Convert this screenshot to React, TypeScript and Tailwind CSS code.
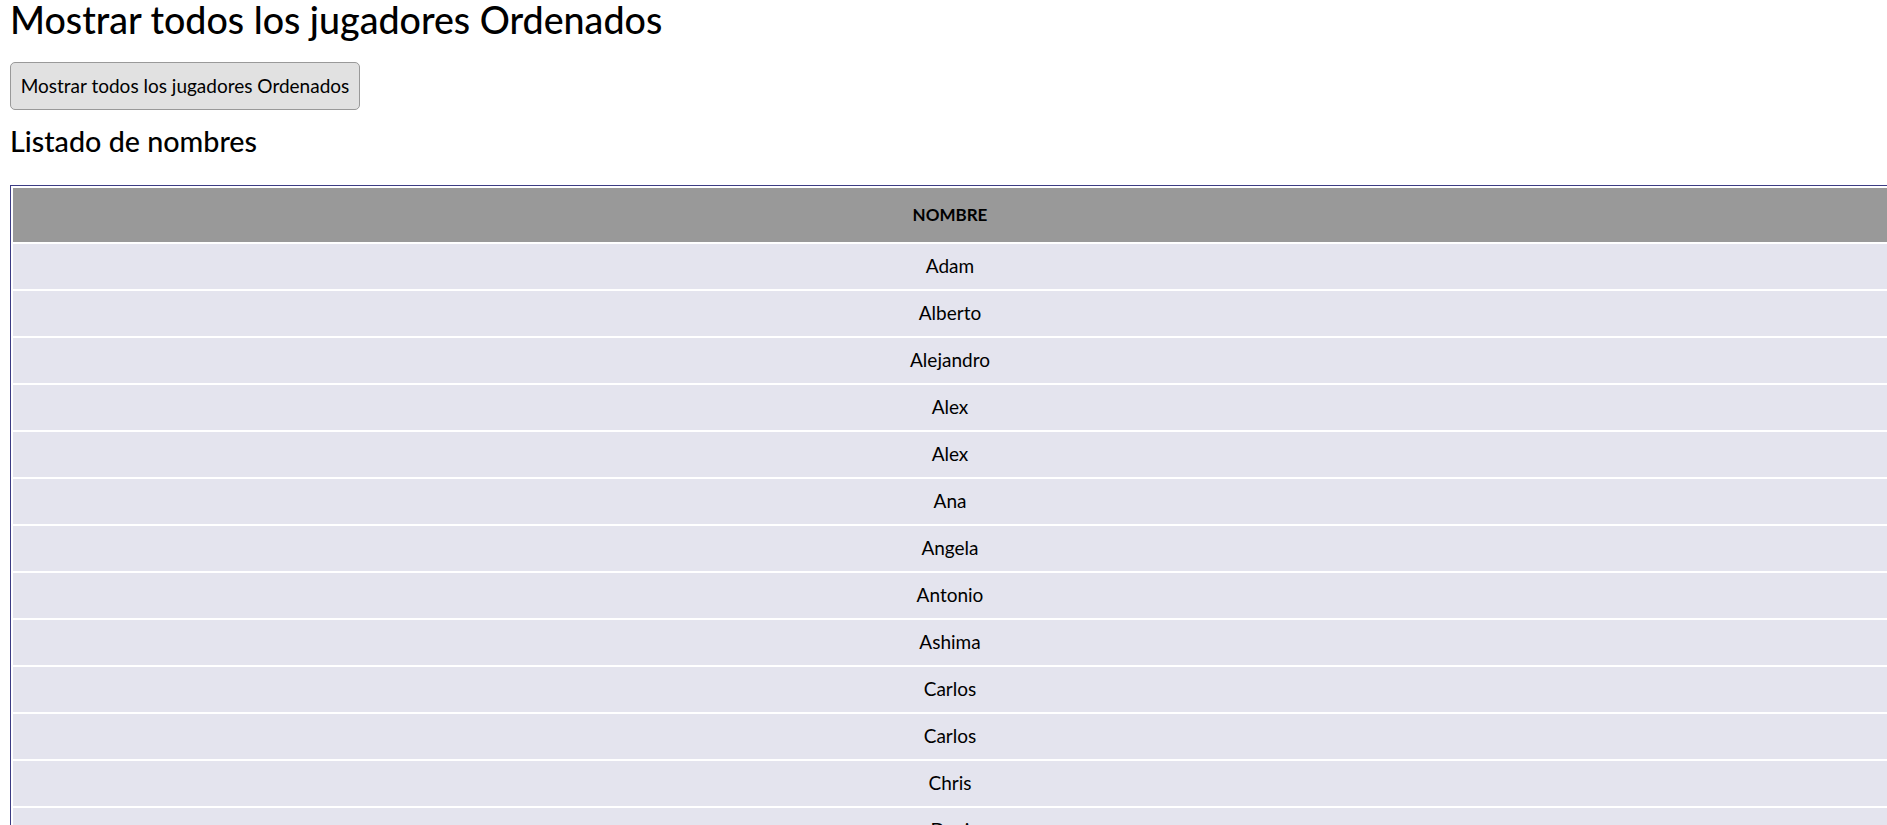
const jugadores = [
  "Adam",
  "Alberto",
  "Alejandro",
  "Alex",
  "Alex",
  "Ana",
  "Angela",
  "Antonio",
  "Ashima",
  "Carlos",
  "Carlos",
  "Chris",
  "Dani",
  "Daniel",
  "David",
  "Elena",
  "Fernando",
];

const App = () => {
  return (
    <div className="min-h-screen bg-white px-[10px] font-['Lato',sans-serif] text-black overflow-x-hidden">
      <h1 className="text-[37.6px] leading-[40px] font-medium">
        Mostrar todos los jugadores Ordenados
      </h1>
      <button className="mt-[22px] h-[48px] w-[350px] rounded-[5px] border border-[#999999] bg-[#e1e1e1] pb-[2px] text-[19px] leading-none text-black">
        Mostrar todos los jugadores Ordenados
      </button>
      <h2 className="mt-[16px] text-[28.7px] leading-[30px] font-medium">
        Listado de nombres
      </h2>
      <table className="mt-[29px] w-[1880px] border-separate border-spacing-[2px] border border-[#3c3c84]">
        <thead>
          <tr>
            <th className="h-[54px] bg-[#999999] p-0 text-center align-middle text-[17px] font-bold">
              NOMBRE
            </th>
          </tr>
        </thead>
        <tbody>
          {jugadores.map((nombre, i) => (
            <tr key={i}>
              <td className="h-[45px] bg-[#e4e4ee] p-0 pb-[1px] text-center align-middle text-[19px]">
                {nombre}
              </td>
            </tr>
          ))}
        </tbody>
      </table>
    </div>
  );
};

export default App;
